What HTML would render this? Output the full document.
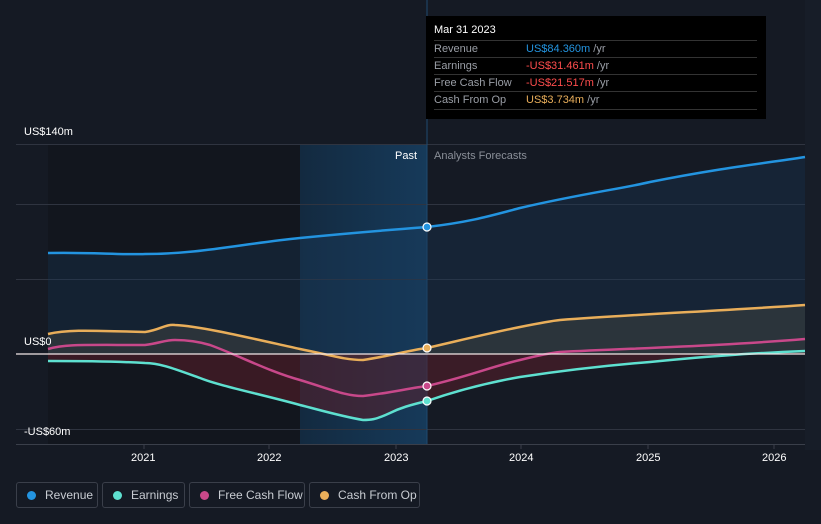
<!DOCTYPE html>
<html><head><meta charset="utf-8"><style>
body{margin:0;width:821px;height:524px;background:#151a24;font-family:"Liberation Sans",sans-serif;overflow:hidden;position:relative}
.t{position:absolute;color:#fff;font-size:11px}
.tip{position:absolute;left:426px;top:16px;width:340px;height:103px;background:#000;}
.tip .h{position:absolute;left:8px;top:8px;color:#fff;font-size:11px}
.row{position:absolute;left:8px;width:323px;border-top:1px solid #333;height:17px;font-size:11px;line-height:17px;color:#9a9ea6}
.row span{position:absolute;left:92px}
.leg{position:absolute;top:482px;height:26px;border:1px solid #3a3f4a;border-radius:3px;color:#c8ccd2;font-size:12px;line-height:25px;box-sizing:border-box;white-space:nowrap;overflow:hidden}
.leg i{display:inline-block;width:9px;height:9px;border-radius:50%;margin:0 9px 0 10px;vertical-align:-1px}
</style></head><body>
<svg width="821" height="524" style="position:absolute;left:0;top:0">
<defs>
<linearGradient id="hl" x1="0" x2="1"><stop offset="0" stop-color="#132a40"/><stop offset="1" stop-color="#163a5a"/></linearGradient>
</defs>
<rect x="48" y="144" width="252" height="300" fill="#12161e"/>
<rect x="300" y="144" width="127" height="300" fill="url(#hl)"/>
<rect x="805" y="0" width="16" height="450" fill="#171d28"/>
<g stroke="#2f3440" stroke-width="1">
<line x1="16" y1="144.5" x2="805" y2="144.5"/>
<line x1="16" y1="204.5" x2="805" y2="204.5"/>
<line x1="16" y1="279.5" x2="805" y2="279.5"/>
<line x1="16" y1="429.5" x2="805" y2="429.5"/>
<line x1="16" y1="444.5" x2="805" y2="444.5" stroke="#3a3f4a"/>
</g>
<line x1="427" y1="0" x2="427" y2="444" stroke="#1e4a70" stroke-width="1"/>
<g stroke="#3a3f4a"><line x1="144" y1="444" x2="144" y2="449"/><line x1="269" y1="444" x2="269" y2="449"/><line x1="396" y1="444" x2="396" y2="449"/><line x1="521" y1="444" x2="521" y2="449"/><line x1="648" y1="444" x2="648" y2="449"/><line x1="774" y1="444" x2="774" y2="449"/></g>
<path d="M48,253 C90,252 120,255 145,254 C200,254 240,244 300,238 C360,232 390,230 427,227 C470,222 490,216 520,208 C580,194 620,189 650,182 C720,168 760,164 805,157 L805,354 L48,354Z" fill="#1a3a58" opacity="0.35"/>
<path d="M48,334 C65,330 80,330 145,332 C160,330 165,324 175,325 C200,326 250,338 300,349 C330,355 345,360 363,360 C390,356 410,350 427,348 C470,338 490,333 520,327 C540,323 550,321 560,320 C640,314 720,311 805,305 L805,354 L48,354Z" fill="#3a3f3f" opacity="0.6"/>
<path d="M48,354 L805,354 L805,351 C720,355 650,362 650,362 C600,366 560,371 520,377 C480,384 450,393 427,401 C410,405 400,408 390,413 C375,420 370,420 363,420 C340,416 320,410 300,405 C260,394 220,386 200,378 C175,369 160,363 145,363 C110,361 80,361 48,361Z" fill="#5a1f2a" opacity="0.55"/>
<g fill="none" stroke-width="2.5">
<path d="M48,253 C90,252 120,255 145,254 C200,254 240,244 300,238 C360,232 390,230 427,227 C470,222 490,216 520,208 C580,194 620,189 650,182 C720,168 760,164 805,157" stroke="#2394e0"/>
<path d="M48,334 C65,330 80,330 145,332 C160,330 165,324 175,325 C200,326 250,338 300,349 C330,355 345,360 363,360 C390,356 410,350 427,348 C470,338 490,333 520,327 C540,323 550,321 560,320 C640,314 720,311 805,305" stroke="#e9ae5a"/>
<path d="M48,349 C65,344 80,345 145,345 C160,343 165,340 175,340 C190,340 200,342 210,345 C240,356 270,372 300,380 C330,389 345,396 363,396 C390,393 410,388 427,386 C470,376 490,367 520,360 C540,355 550,353 560,352 C640,348 720,346 805,339" stroke="#c8488a"/>
<path d="M48,361 C80,361 110,361 145,363 C160,363 175,369 200,378 C220,386 260,394 300,405 C320,410 340,416 363,420 C370,420 375,420 390,413 C400,408 410,405 427,401 C450,393 480,384 520,377 C560,371 600,366 650,362 C720,355 760,353 805,351" stroke="#5ee0d0"/>
</g>
<line x1="16" y1="354" x2="805" y2="354" stroke="#f2e6e6" stroke-width="1.2"/>
<g stroke="#fff" stroke-width="1.2">
<circle cx="427" cy="227" r="4" fill="#2394e0"/>
<circle cx="427" cy="348" r="4" fill="#e9ae5a"/>
<circle cx="427" cy="386" r="4" fill="#c8488a"/>
<circle cx="427" cy="401" r="4" fill="#5ee0d0"/>
</g>
</svg>
<div class="t" style="left:24px;top:126px">US$140m</div>
<div class="t" style="left:24px;top:336px">US$0</div>
<div class="t" style="left:24px;top:426px">-US$60m</div>
<div class="t" style="left:395px;top:150px">Past</div>
<div class="t" style="left:434px;top:150px;color:#8a8f98">Analysts Forecasts</div>
<div class="t" style="left:131px;top:452px">2021</div>
<div class="t" style="left:257px;top:452px">2022</div>
<div class="t" style="left:384px;top:452px">2023</div>
<div class="t" style="left:509px;top:452px">2024</div>
<div class="t" style="left:636px;top:452px">2025</div>
<div class="t" style="left:762px;top:452px">2026</div>
<div class="tip">
<div class="h">Mar 31 2023</div>
<div class="row" style="top:24px">Revenue<span><b style="font-weight:normal;color:#2394e0">US$84.360m</b> /yr</span></div>
<div class="row" style="top:41px">Earnings<span><b style="font-weight:normal;color:#ff4d4d">-US$31.461m</b> /yr</span></div>
<div class="row" style="top:58px">Free Cash Flow<span><b style="font-weight:normal;color:#ff4d4d">-US$21.517m</b> /yr</span></div>
<div class="row" style="top:75px;border-bottom:1px solid #333">Cash From Op<span><b style="font-weight:normal;color:#e9ae5a">US$3.734m</b> /yr</span></div>
</div>
<div class="leg" style="left:16px;width:82px"><i style="background:#2394e0"></i>Revenue</div>
<div class="leg" style="left:102px;width:83px"><i style="background:#5ee0d0"></i>Earnings</div>
<div class="leg" style="left:189px;width:116px"><i style="background:#c8488a"></i>Free Cash Flow</div>
<div class="leg" style="left:309px;width:111px"><i style="background:#e9ae5a"></i>Cash From Op</div>
</body></html>
